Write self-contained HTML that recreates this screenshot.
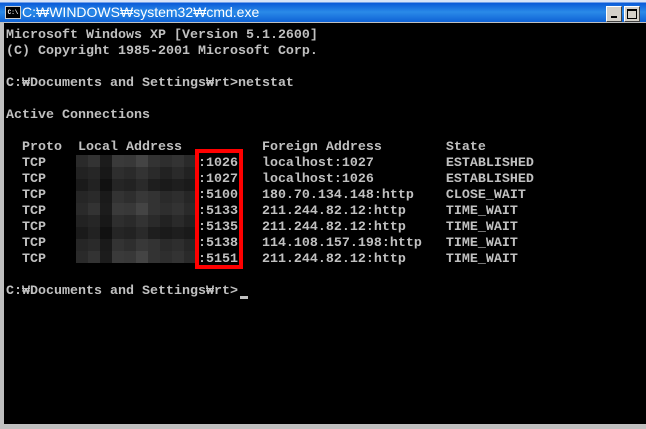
<!DOCTYPE html>
<html><head><meta charset="utf-8"><style>
html,body{margin:0;padding:0;}
body{width:646px;height:429px;background:#c0c0c0;position:relative;overflow:hidden;}
#title{position:absolute;left:0;top:0;width:646px;height:22px;background:linear-gradient(#d8e4f8 0,#d8e4f8 2px,#0a5ad8 3px,#2a8ae8 12px,#0e62d6 22px);}
#title span{position:absolute;left:22px;top:4px;color:#fff;font:14px "Liberation Sans","Noto Sans CJK KR",sans-serif;}
#icon{position:absolute;left:5px;top:6px;width:14px;height:11px;background:#000;border:1px solid #ccc;color:#fff;font:bold 6px "Liberation Mono",monospace;line-height:11px;text-align:center;}
.btn{position:absolute;top:6px;width:14px;height:14px;background:#d4d0c8;border:1px solid;border-color:#fff #404040 #404040 #fff;}
#con{position:absolute;left:4px;top:23px;width:642px;height:401px;background:#000;}
#bot{position:absolute;left:0;top:426px;width:646px;height:3px;background:#c0c0c0;}
pre{position:absolute;left:2px;top:5px;margin:0;color:#c0c0c0;font:bold 13.33px/16px "Liberation Mono","Noto Sans CJK KR",monospace;}
#mosaic{position:absolute;left:72px;top:132px;width:120px;height:108px;display:grid;grid-template-columns:repeat(10,12px);grid-template-rows:repeat(9,12px);}
#box{position:absolute;left:191px;top:126px;width:40px;height:112px;border:4px solid #f00;}
#cur{position:absolute;left:236px;top:273px;width:8px;height:3px;background:#c0c0c0;}
</style></head><body>
<div id="title"><div id="icon">C:\</div><span>C:₩WINDOWS₩system32₩cmd.exe</span>
<div class="btn" style="left:606px"><div style="position:absolute;left:4px;top:9px;width:6px;height:2px;background:#000"></div></div>
<div class="btn" style="left:624px"><div style="position:absolute;left:2px;top:2px;width:8px;height:7px;border:1px solid #000;border-top-width:2px"></div></div>
</div>
<div id="con">
<pre>Microsoft Windows XP [Version 5.1.2600]
(C) Copyright 1985-2001 Microsoft Corp.

C:₩Documents and Settings₩rt>netstat

Active Connections

  Proto  Local Address          Foreign Address        State
  TCP                   :1026   localhost:1027         ESTABLISHED
  TCP                   :1027   localhost:1026         ESTABLISHED
  TCP                   :5100   180.70.134.148:http    CLOSE_WAIT
  TCP                   :5133   211.244.82.12:http     TIME_WAIT
  TCP                   :5135   211.244.82.12:http     TIME_WAIT
  TCP                   :5138   114.108.157.198:http   TIME_WAIT
  TCP                   :5151   211.244.82.12:http     TIME_WAIT

C:₩Documents and Settings₩rt></pre>
<div id="mosaic">
<div style="background:#2a2a2a"></div><div style="background:#333"></div><div style="background:#1c1c1c"></div><div style="background:#3a3a3a"></div><div style="background:#383838"></div><div style="background:#444"></div><div style="background:#333"></div><div style="background:#2e2e2e"></div><div style="background:#333"></div><div style="background:#2a2a2a"></div>
<div style="background:#222"></div><div style="background:#262626"></div><div style="background:#181818"></div><div style="background:#2e2e2e"></div><div style="background:#2a2a2a"></div><div style="background:#333"></div><div style="background:#2a2a2a"></div><div style="background:#222"></div><div style="background:#2a2a2a"></div><div style="background:#222"></div>
<div style="background:#1a1a1a"></div><div style="background:#222"></div><div style="background:#111"></div><div style="background:#252525"></div><div style="background:#222"></div><div style="background:#2a2a2a"></div><div style="background:#1e1e1e"></div><div style="background:#1a1a1a"></div><div style="background:#1e1e1e"></div><div style="background:#1a1a1a"></div>
<div style="background:#262626"></div><div style="background:#2a2a2a"></div><div style="background:#1a1a1a"></div><div style="background:#333"></div><div style="background:#2e2e2e"></div><div style="background:#383838"></div><div style="background:#333"></div><div style="background:#2a2a2a"></div><div style="background:#2e2e2e"></div><div style="background:#262626"></div>
<div style="background:#2a2a2a"></div><div style="background:#333"></div><div style="background:#1c1c1c"></div><div style="background:#3a3a3a"></div><div style="background:#383838"></div><div style="background:#444"></div><div style="background:#333"></div><div style="background:#2e2e2e"></div><div style="background:#333"></div><div style="background:#2a2a2a"></div>
<div style="background:#222"></div><div style="background:#262626"></div><div style="background:#181818"></div><div style="background:#2e2e2e"></div><div style="background:#2a2a2a"></div><div style="background:#333"></div><div style="background:#2a2a2a"></div><div style="background:#222"></div><div style="background:#2a2a2a"></div><div style="background:#222"></div>
<div style="background:#1a1a1a"></div><div style="background:#222"></div><div style="background:#111"></div><div style="background:#252525"></div><div style="background:#222"></div><div style="background:#2a2a2a"></div><div style="background:#1e1e1e"></div><div style="background:#1a1a1a"></div><div style="background:#1e1e1e"></div><div style="background:#1a1a1a"></div>
<div style="background:#262626"></div><div style="background:#2a2a2a"></div><div style="background:#1a1a1a"></div><div style="background:#333"></div><div style="background:#2e2e2e"></div><div style="background:#383838"></div><div style="background:#333"></div><div style="background:#2a2a2a"></div><div style="background:#2e2e2e"></div><div style="background:#262626"></div>
<div style="background:#2a2a2a"></div><div style="background:#333"></div><div style="background:#1c1c1c"></div><div style="background:#3a3a3a"></div><div style="background:#383838"></div><div style="background:#444"></div><div style="background:#333"></div><div style="background:#2e2e2e"></div><div style="background:#333"></div><div style="background:#2a2a2a"></div>
</div>
<div id="box"></div>
<div id="cur"></div>
</div>
<div id="bot"></div>
</body></html>
